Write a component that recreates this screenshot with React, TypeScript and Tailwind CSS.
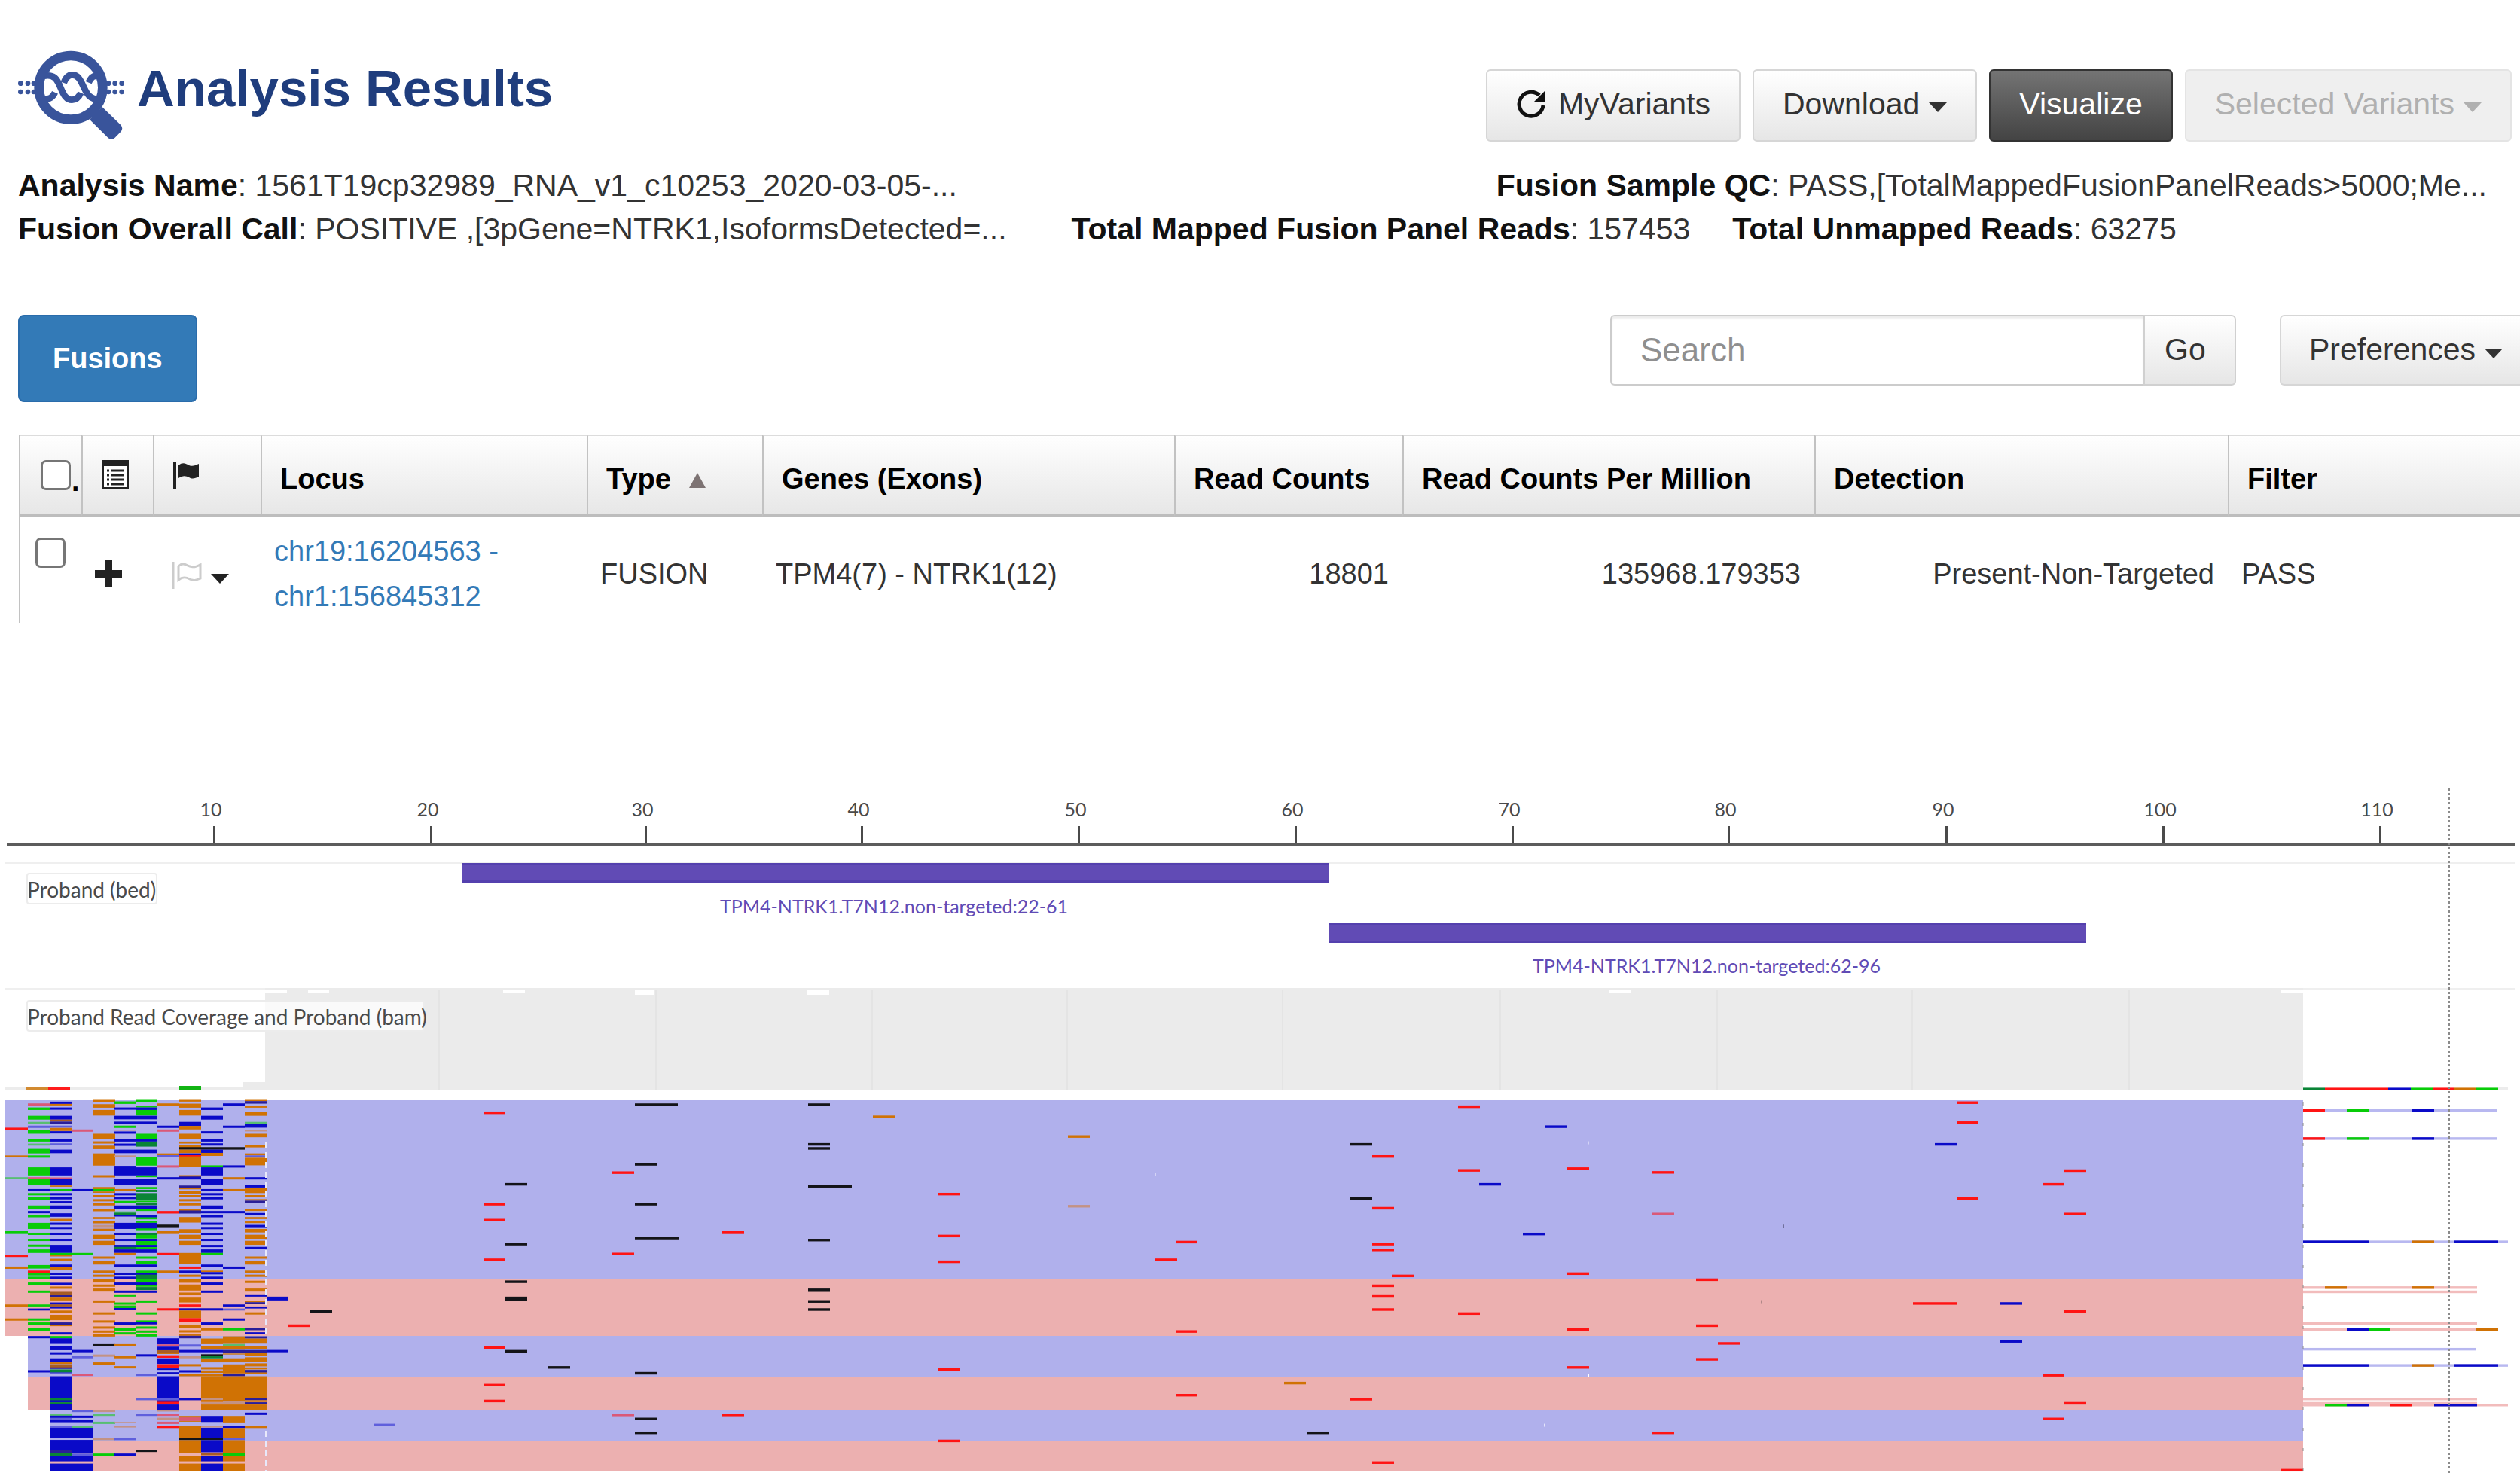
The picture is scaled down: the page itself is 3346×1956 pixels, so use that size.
import type { ReactNode } from "react"

const colors: Record<string, string> = {
  r: "#ff1414",
  g: "#08cc08",
  b: "#0a0ac8",
  o: "#d07204",
  k: "#141418",
  R: "#da5878",
  G: "#58be72",
  B: "#5f5fdc",
  O: "#c39284",
  n: "#2a1e98",
  d: "#0a8436",
  w: "#a85c24",
  l: "#b8b8f0",
  p: "#f2bcbc",
}

// Pileup positions are kept on a finer grid than the page, about three units to a pixel
const PILEUP_TOP = 1430
const UNITS = 2.981
const toY = (v: number) => PILEUP_TOP + v / UNITS

const ticks = [
  { label: "10", x: 284 },
  { label: "20", x: 572 },
  { label: "30", x: 857 },
  { label: "40", x: 1144 },
  { label: "50", x: 1432 },
  { label: "60", x: 1720 },
  { label: "70", x: 2008 },
  { label: "80", x: 2295 },
  { label: "90", x: 2584 },
  { label: "100", x: 2872 },
  { label: "110", x: 3160 },
]

const bands = [
  { x: 7, y: 1461, h: 237, fill: "#b0b0ec" },
  { x: 7, y: 1698, h: 76, fill: "#ecb0b0" },
  { x: 37, y: 1774, h: 54, fill: "#b0b0ec" },
  { x: 37, y: 1828, h: 45, fill: "#ecb0b0" },
  { x: 66, y: 1873, h: 41, fill: "#b0b0ec" },
  { x: 66, y: 1914, h: 40, fill: "#ecb0b0" },
]

// One entry per base: left edge, width, then "colour top height" triples
const columns: { x: number; w: number; marks: string }[] = [
  { x: 7, w: 30, marks: "r 201 9,o 311 8,G 397 8,g 610 9,r 704 9,o 751 9,o 901 9,o 956 9" },
  {
    x: 37,
    w: 29,
    marks:
      "R 105 10,g 121 10,g 154 15,G 178 8,B 193 9,g 211 14,g 247 9,G 264 8,g 285 18,g 311 9,g 358 32,R 397 7,g 403 26,b 444 9,g 460 9,g 477 9,g 509 14,b 531 9,g 548 8,g 578 24,g 617 9,g 641 9,g 664 9,g 683 14,g 745 14,r 767 9,g 776 10,g 791 9,g 814 9,g 846 9,g 901 8,b 917 8,g 956 9,g 972 9,g 995 10,b 1026 9,b 1161 9",
  },
  {
    x: 66,
    w: 29,
    marks:
      "b 98 9,o 107 6,b 121 9,b 154 15,w 169 8,n 177 10,B 193 8,o 202 12,b 215 9,b 247 9,B 263 8,b 288 14,b 358 32,R 398 6,b 404 26,o 430 5,g 444 9,b 460 9,b 476 9,b 492 8,b 509 15,b 540 14,o 562 9,b 577 9,b 594 9,b 617 9,b 641 9,b 665 32,g 697 7,o 704 7,o 720 9,b 743 9,o 752 14,b 775 9,b 791 9,b 815 9,o 830 9,w 848 16,n 862 9,o 871 14,b 893 9,w 901 8,b 909 8,o 925 9,o 942 21,n 972 9,o 981 6,b 1011 9,g 1026 9,b 1035 22,b 1067 15,b 1090 9,b 1114 16,o 1130 7,w 1138 14,n 1150 6,d 1158 12,b 1170 3,b 1185 85,d 1270 12,b 1280 8,d 1288 9,b 1296 22,G 1333 9,b 1341 9,B 1350 8,b 1358 9,B 1382 7,b 1389 39,b 1437 39,n 1476 14,d 1490 11,b 1500 22,b 1531 30",
  },
  {
    x: 95,
    w: 29,
    marks:
      "R 208 9,b 444 9,g 697 9,b 1081 9,B 1105 9,R 1176 8,B 1319 8,b 1341 9,b 1358 9,G 1382 7,b 1389 39,b 1437 39,b 1476 14,B 1491 9,b 1500 22,b 1531 30",
  },
  {
    x: 124,
    w: 29,
    marks:
      "o 91 8,o 108 14,o 131 22,o 225 22,o 255 9,o 272 14,o 303 14,o 317 34,o 389 9,o 436 8,g 444 10,o 454 5,o 468 9,o 484 9,o 500 9,o 523 9,o 555 8,o 571 9,O 586 9,o 601 9,o 625 16,o 649 16,o 711 9,o 729 14,o 767 9,o 783 9,o 800 14,o 822 9,o 838 9,o 885 9,o 932 9,o 964 9,o 988 9,o 1004 9,o 1019 9,k 1058 9,O 1099 9,o 1130 9,O 1319 8,G 1333 9,G 1365 9,O 1429 9,g 1491 9",
  },
  {
    x: 151,
    w: 29,
    marks:
      "g 97 10,b 121 9,b 154 14,b 177 9,g 193 9,O 209 4,b 216 9,b 247 9,b 264 9,b 288 14,O 311 8,b 352 38,b 404 25,o 444 9,b 460 9,b 476 8,g 491 9,b 509 14,g 533 5,d 538 10,b 548 5,b 578 24,b 617 9,b 641 9,b 665 9,d 673 9,b 683 14,o 697 8,b 743 9,b 775 9,b 791 9,b 814 9,b 846 9,g 861 9,g 893 9,g 905 10,b 915 9,b 972 9,g 995 10,g 1011 9,o 1058 9,o 1105 9,o 1145 9,O 1366 5,O 1383 5,B 1429 9,b 1491 9",
  },
  {
    x: 180,
    w: 29,
    marks:
      "g 91 8,g 115 6,b 121 10,g 131 22,b 154 14,b 177 9,g 225 22,b 247 9,d 256 20,b 288 14,g 317 34,b 358 32,g 390 7,b 404 25,g 436 8,d 447 9,d 460 28,g 490 6,d 500 8,b 509 14,g 524 7,b 548 9,g 556 8,g 571 7,b 578 24,g 600 7,d 617 9,g 626 14,b 641 9,g 650 15,b 665 9,g 674 8,b 683 14,g 711 9,g 729 14,b 743 9,g 767 8,b 775 9,d 783 16,g 799 14,b 814 11,g 825 6,d 832 12,b 846 9,g 885 9,g 932 9,g 964 7,b 971 9,g 988 9,g 1004 9,g 1019 9,b 1098 9,B 1176 8,B 1271 9,B 1333 9,k 1476 9",
  },
  {
    x: 209,
    w: 29,
    marks:
      "o 105 10,b 193 9,R 208 9,o 303 8,B 310 7,R 350 9,b 397 9,r 531 10,k 585 10,o 610 9,r 697 9,o 767 9,r 916 9,b 1035 24,R 1059 9,b 1068 14,w 1082 10,o 1091 6,r 1102 10,b 1114 22,r 1137 16,b 1154 6,b 1169 8,b 1185 85,B 1270 10,b 1280 8,r 1286 11,b 1297 22,O 1319 6,R 1333 9,O 1349 9,R 1365 9,r 1381 9",
  },
  {
    x: 238,
    w: 29,
    marks:
      "o 91 7,o 106 16,o 131 22,b 178 16,o 194 14,o 225 22,o 256 8,o 270 10,k 278 10,o 288 14,b 303 9,r 310 6,o 315 40,o 389 7,n 394 5,b 397 9,n 430 10,o 440 5,o 453 9,o 468 8,o 484 9,o 500 9,o 524 7,n 529 12,o 555 22,o 603 14,o 625 16,o 649 16,o 697 45,r 751 9,b 767 9,o 783 9,o 799 16,o 822 24,o 854 9,o 871 22,r 901 8,b 916 9,o 925 30,r 955 14,o 982 12,o 1003 9,o 1018 7,n 1025 10,B 1059 9,b 1081 9,O 1106 8,o 1137 9,b 1161 9,o 1176 9,b 1270 10,o 1342 8,R 1348 14,o 1362 3,o 1382 46,k 1428 10,o 1438 52,o 1500 22,o 1531 30",
  },
  {
    x: 267,
    w: 29,
    marks:
      "b 121 10,b 154 15,b 215 9,b 247 9,b 263 9,k 278 10,b 288 13,o 301 12,g 350 8,b 358 32,b 404 25,b 444 9,b 460 9,b 476 9,b 509 14,b 531 9,b 547 9,b 577 9,b 594 9,b 617 9,b 641 9,b 665 9,b 683 14,g 697 7,b 743 9,o 767 6,b 773 9,b 791 9,b 814 9,b 846 9,b 916 9,b 972 9,o 995 9,o 1036 22,o 1066 14,b 1081 9,k 1098 8,d 1106 8,o 1115 15,o 1149 9,o 1162 10,o 1176 9,o 1185 86,O 1271 8,o 1279 8,O 1288 7,o 1297 22,b 1342 24,O 1383 5,b 1389 39,k 1428 10,b 1438 48,w 1488 10,b 1500 22,b 1531 30",
  },
  {
    x: 296,
    w: 29,
    marks:
      "b 105 9,b 193 9,k 278 10,b 350 9,o 397 9,o 444 9,b 531 9,b 751 9,b 901 8,B 917 8,b 956 9,g 995 9,o 1027 30,G 1058 9,o 1066 14,n 1081 12,o 1095 4,o 1114 16,o 1138 36,n 1176 9,o 1185 98,O 1284 10,o 1297 22,o 1342 26,b 1382 8,o 1390 38,B 1429 9,o 1438 50,g 1490 10,o 1500 22,o 1531 30",
  },
  {
    x: 325,
    w: 29,
    marks:
      "o 91 5,n 96 10,o 114 8,o 138 16,G 178 8,b 185 16,O 209 7,o 225 14,o 271 8,o 303 8,B 311 8,o 320 30,b 397 9,b 429 9,o 440 20,o 468 9,o 484 6,n 490 10,o 524 7,b 539 9,o 555 8,o 571 8,b 586 9,o 602 14,o 625 16,o 649 16,b 673 9,o 711 9,o 729 14,o 767 9,o 783 9,o 807 9,o 838 9,b 861 9,o 886 6,n 892 8,b 909 8,o 932 9,n 994 9,b 1011 8,n 1027 9,o 1036 20,o 1066 13,n 1081 10,o 1094 9,o 1110 19,o 1134 12,o 1150 8,n 1160 11,o 1170 5,o 1185 86,n 1271 9,o 1280 7,n 1288 9,o 1297 22,b 1329 9,o 1382 8",
  },
  { x: 354, w: 29, marks: "b 870 15,b 1081 9" },
]

// Single mismatches: colour, left edge, vertical centres, optional width
const mismatches: [string, number, number[], number?][] = [
  ["k", 843, [110], 57],
  ["k", 843, [638], 58],
  ["k", 1073, [433], 58],
  ["k", 1073, [110, 267, 283, 646, 843, 889, 921]],
  ["k", 843, [346, 504, 1173, 1354, 1409]],
  ["k", 671, [425, 662, 811, 875, 881, 1086]],
  ["k", 412, [929]],
  ["k", 728, [1150]],
  ["k", 1793, [267, 481]],
  ["k", 1735, [1409]],
  ["r", 642, [142, 504, 567, 724, 1071, 1220, 1283]],
  ["r", 813, [379, 701]],
  ["R", 813, [1338]],
  ["r", 959, [614, 1338]],
  ["r", 1246, [464, 630, 732, 1158, 1441]],
  ["r", 383, [985]],
  ["r", 1534, [724]],
  ["r", 1561, [654, 1008, 1260]],
  ["r", 1822, [315, 520, 662, 685, 827, 866, 921, 1527]],
  ["r", 1848, [788]],
  ["r", 1793, [1276]],
  ["r", 1936, [118, 370, 937]],
  ["r", 2081, [363, 779, 1000, 1150]],
  ["r", 2194, [378, 1409]],
  ["R", 2194, [543]],
  ["r", 2252, [803, 985, 1118]],
  ["r", 2281, [1055]],
  ["r", 2598, [102, 181, 481]],
  ["r", 2540, [897], 58],
  ["r", 2712, [425, 1181, 1354]],
  ["r", 2741, [371, 543, 929, 1292]],
  ["r", 3029, [1557]],
  ["o", 1159, [158]],
  ["o", 1418, [236]],
  ["O", 1418, [512]],
  ["o", 1705, [1212]],
  ["b", 2052, [197]],
  ["b", 1964, [425]],
  ["b", 2022, [622]],
  ["b", 2569, [267]],
  ["b", 2656, [897, 1047]],
  ["B", 496, [1378]],
]

// Soft clipped read ends to the right of the covered region
const tails: [string, number, number[], number][] = [
  ["l", 3058, [133, 244], 258],
  ["l", 3058, [653, 1142], 272],
  ["l", 3058, [1078], 230],
  ["p", 3058, [834, 851, 976, 1000, 1275, 1292], 231],
  ["p", 3058, [1299], 272],
  ["r", 3058, [133, 244], 29],
  ["g", 3116, [133, 244], 29],
  ["b", 3203, [133, 244], 29],
  ["b", 3058, [653, 1142], 87],
  ["o", 3203, [653, 834, 1142], 29],
  ["b", 3259, [653, 1142], 58],
  ["o", 3087, [834], 29],
  ["b", 3116, [1000, 1299], 29],
  ["g", 3145, [1000], 29],
  ["o", 3288, [1000], 29],
  ["g", 3087, [1299], 29],
  ["r", 3174, [1299], 29],
  ["b", 3232, [1299], 57],
  ["d", 3058, [48], 29],
  ["r", 3087, [48], 84],
  ["b", 3171, [48], 30],
  ["g", 3201, [48], 29],
  ["r", 3230, [48], 29],
  ["o", 3259, [48], 29],
  ["g", 3288, [48], 29],
]

const coverageLines = [583, 871, 1158, 1417, 1703, 1992, 2280, 2539, 2827]

const coverageNotches = [
  { x: 352, w: 29, h: 4 },
  { x: 409, w: 28, h: 4 },
  { x: 668, w: 29, h: 4 },
  { x: 843, w: 26, h: 6 },
  { x: 1072, w: 29, h: 6 },
  { x: 2137, w: 28, h: 4 },
  { x: 3029, w: 29, h: 4 },
]

const specks = [
  { x: 1533, v: 380, fill: "#d4d4f6" },
  { x: 2108, v: 255, fill: "#d4d4f6" },
  { x: 2108, v: 1176, fill: "#ffffff" },
  { x: 2050, v: 1373, fill: "#e4e4fa" },
  { x: 2367, v: 585, fill: "#70709c" },
  { x: 2338, v: 884, fill: "#b08888" },
]

function Logo() {
  return (
    <svg viewBox="40 35 426 360" className="h-[120px] w-[142px]" fill="none" stroke="#39549b" aria-hidden="true">
      <circle cx="250" cy="183" r="127" strokeWidth="38" />
      <path d="M325 310 398 382Q412 396 426 382L448 360Q462 345 447 330L375 260Z" fill="#39549b" stroke="none" />
      <path d="M145 136C182 130 194 146 208 180C222 214 232 232 255 232C272 232 283 220 290 204" strokeWidth="26" />
      <path d="M222 164C230 142 240 132 256 132C278 132 288 150 302 182C316 212 328 230 362 230" strokeWidth="26" />
      <path d="M142 230C166 230 178 222 187 202" strokeWidth="26" />
      <path d="M321 163C330 142 340 134 362 135" strokeWidth="26" />
      <g fill="#39549b" stroke="none">
        {[50, 79, 103, 400, 426, 453].map((x) => (
          <g key={x}>
            <circle cx={x} cy="166" r="10" />
            <circle cx={x} cy="200" r="10" />
          </g>
        ))}
      </g>
    </svg>
  )
}

function Caret() {
  return (
    <svg viewBox="0 0 24 13" className="mt-2 h-[13px] w-6" fill="currentColor" aria-hidden="true">
      <path d="M0 0h24L12 13z" />
    </svg>
  )
}

function RepeatIcon() {
  return (
    <svg viewBox="0 0 40 40" className="h-10 w-10" aria-hidden="true">
      <path d="M31 8.500A16 16 0 1 0 36 22" fill="none" stroke="#111" strokeWidth="5" />
      <path d="M39 2v15H24z" fill="#111" />
    </svg>
  )
}

function Field({ label, children }: { label: string; children: ReactNode }) {
  return (
    <div className="whitespace-nowrap">
      <span className="font-bold text-[#111]">{label}</span>: {children}
    </div>
  )
}

const buttonBase = "flex h-24 items-center rounded-md border-2 pb-1 text-[41px] leading-none"
const lightButton = "border-[#d6d6d6] bg-linear-to-b from-white to-[#e6e6e6] text-[#333]"

function ResultsHeader() {
  return (
    <header className="flex items-start justify-between pt-[67px] pr-[11px] pl-6">
      <div className="flex items-start gap-4">
        <Logo />
        <h1 className="pt-[11px] text-[69px] leading-[80px] font-bold text-[#1f3d7d]">Analysis Results</h1>
      </div>
      <div className="flex gap-4 pt-[25px]">
        <button type="button" className={`${buttonBase} ${lightButton} gap-4 px-[38px]`}>
          <RepeatIcon />
          MyVariants
        </button>
        <button type="button" className={`${buttonBase} ${lightButton} gap-3 px-[38px]`}>
          Download
          <Caret />
        </button>
        <button type="button" className={`${buttonBase} border-[#333] bg-linear-to-b from-[#747474] to-[#444] px-[38px] text-white`}>
          Visualize
        </button>
        <button type="button" disabled className={`${buttonBase} gap-3 border-[#e4e4e4] bg-[#efefef] px-[38px] text-[#b0b0b0]`}>
          Selected Variants
          <Caret />
        </button>
      </div>
    </header>
  )
}

function Summary() {
  return (
    <section className="mt-[29px] pl-6 text-[41px] leading-[58px] text-[#333]">
      <div className="flex justify-between pr-11">
        <Field label="Analysis Name">1561T19cp32989_RNA_v1_c10253_2020-03-05-...</Field>
        <Field label="Fusion Sample QC">PASS,[TotalMappedFusionPanelReads&gt;5000;Me...</Field>
      </div>
      <div className="flex gap-14">
        <div className="pr-[30px]">
          <Field label="Fusion Overall Call">POSITIVE ,[3pGene=NTRK1,IsoformsDetected=...</Field>
        </div>
        <Field label="Total Mapped Fusion Panel Reads">157453</Field>
        <Field label="Total Unmapped Reads">63275</Field>
      </div>
    </section>
  )
}

function Toolbar() {
  return (
    <div className="mt-[85px] flex items-start justify-between pl-6">
      <button type="button" className="h-[116px] rounded-lg border-2 border-[#2a6cab] bg-[#337ab7] px-11 text-[38px] font-bold text-white">
        Fusions
      </button>
      <div className="flex">
        <form className="flex" onSubmit={(e) => e.preventDefault()}>
          <input
            type="search"
            aria-label="Search"
            placeholder="Search"
            className="h-[94px] w-[708px] rounded-l-md border-2 border-r-0 border-[#ccc] bg-white px-[38px] text-[44px] text-[#333] shadow-[inset_0_3px_3px_rgba(0,0,0,0.08)] outline-none placeholder:text-[#8f8f8f]"
          />
          <button type="submit" className="h-[94px] w-[123px] rounded-r-md border-2 border-[#d0d0d0] bg-linear-to-b from-white to-[#e6e6e6] pr-3 text-[41px] text-[#333]">
            Go
          </button>
        </form>
        <button type="button" className="ml-[58px] flex h-[94px] items-center gap-3 rounded-l-md border-2 border-r-0 border-[#d6d6d6] bg-linear-to-b from-white to-[#e6e6e6] pr-[23px] pl-[37px] text-[41px] text-[#333]">
          Preferences
          <Caret />
        </button>
      </div>
    </div>
  )
}

const th = "border-l-2 border-[#c2c2c2] pt-[11px] pl-6 text-left align-middle font-bold text-black"
const td = "px-[18px] pt-4 pb-[5px] align-middle"
const checkbox = "block h-10 w-10 appearance-none rounded-[7px] border-[3px] border-[#767676] bg-white"

function FusionTable() {
  return (
    <div className="mt-[43px] pl-[25px]">
      <table className="w-full table-fixed border-separate border-spacing-0 border-l-2 border-[#c2c2c2] text-[38px] leading-[60px] whitespace-nowrap text-[#333]">
        <colgroup>
          <col className="w-[81px]" />
          <col className="w-[95px]" />
          <col className="w-[143px]" />
          <col className="w-[433px]" />
          <col className="w-[233px]" />
          <col className="w-[547px]" />
          <col className="w-[303px]" />
          <col className="w-[547px]" />
          <col className="w-[549px]" />
          <col />
        </colgroup>
        <thead>
          <tr className="h-[109px] bg-linear-to-b from-white to-[#e6e6e6] *:border-t-2 *:border-b-4 *:border-t-[#dcdcdc] *:border-b-[#bdbdbd]">
            <th className="pl-[27px] text-left align-middle">
              <div className="flex items-end gap-px">
                <input type="checkbox" aria-label="Select all" className={checkbox} />
                <span className="leading-[24px] text-black">.</span>
              </div>
            </th>
            <th className="border-l-2 border-[#c2c2c2] pl-[25px] align-middle">
              <svg viewBox="0 0 36 39" className="h-[39px] w-9" aria-label="Details">
                <rect x="1.500" y="1.500" width="33" height="36" fill="#fff" stroke="#222" strokeWidth="3" />
                <path d="M0 0h36v8H0z" fill="#222" />
                <path d="M7 14h3M7 20h3M7 26h3M7 32h3M13 14h16M13 20h16M13 26h16M13 32h16" stroke="#222" strokeWidth="3" />
              </svg>
            </th>
            <th className="border-l-2 border-[#c2c2c2] pl-[25px] align-middle">
              <svg viewBox="0 0 34 36" className="h-9 w-[34px]" fill="#222" aria-label="Flag">
                <path d="M0 0h4v36H0zM7 5C13 0 17 3 21 5C26 7 29 5 34 3V20C29 22 26 24 21 21C17 19 13 18 7 22z" />
              </svg>
            </th>
            <th className={th}>Locus</th>
            <th className={th} aria-sort="ascending">
              <div className="flex items-center gap-6">
                Type
                <svg viewBox="0 0 22 20" className="mt-1 h-5 w-[22px]" fill="#7d7373" aria-hidden="true">
                  <path d="M11 0 22 20H0z" />
                </svg>
              </div>
            </th>
            <th className={th}>Genes (Exons)</th>
            <th className={th}>Read Counts</th>
            <th className={th}>Read Counts Per Million</th>
            <th className={th}>Detection</th>
            <th className={th}>Filter</th>
          </tr>
        </thead>
        <tbody>
          <tr>
            <td className="pt-7 pl-5 align-top">
              <input type="checkbox" aria-label="Select chr19:16204563 - chr1:156845312" className={checkbox} />
            </td>
            <td className="pt-[11px] pl-[18px] align-middle">
              <button type="button" aria-label="Expand row" className="block">
                <svg viewBox="0 0 36 36" className="h-9 w-9" fill="#222">
                  <path d="M13 0h10v13h13v10H23v13H13V23H0V13h13z" />
                </svg>
              </button>
            </td>
            <td className="pt-[15px] pl-[25px] align-middle">
              <button type="button" aria-label="Set flag" className="flex items-center gap-3 text-[#222]">
                <svg viewBox="0 0 40 36" className="h-9 w-10" fill="none" stroke="#ccc" strokeWidth="3">
                  <path d="M2 0v36M9 6C15 0 20 5 24 6C30 8 33 6 38 4V22C33 24 30 26 24 23C20 21 15 19 9 24z" />
                </svg>
                <Caret />
              </button>
            </td>
            <td className={td}>
              <a href="#" className="text-[#337ab7]">
                chr19:16204563 -<br />
                chr1:156845312
              </a>
            </td>
            <td className={td}>FUSION</td>
            <td className={td}>TPM4(7) - NTRK1(12)</td>
            <td className={`${td} text-right`}>18801</td>
            <td className={`${td} text-right`}>135968.179353</td>
            <td className={`${td} text-right`}>Present-Non-Targeted</td>
            <td className={td}>PASS</td>
          </tr>
        </tbody>
      </table>
    </div>
  )
}

function TrackViewer() {
  return (
    <svg viewBox="0 1040 3346 916" className="mt-[213px] block w-full font-['Lato',sans-serif]" role="img" aria-label="Read alignment tracks">
      {/* ruler */}
      <g fill="#4a4a4a" fontSize="25" textAnchor="middle">
        {ticks.map((t) => (
          <g key={t.label}>
            <text x={t.x - 4} y="1084">
              {t.label}
            </text>
            <rect x={t.x - 1} y="1097" width="3" height="23" />
          </g>
        ))}
      </g>
      <rect x="9" y="1119" width="3331" height="4" fill="#5c5c5c" />

      {/* bed track */}
      <rect x="7" y="1144" width="3333" height="3" fill="#efefef" />
      <rect x="7" y="1312" width="3333" height="3" fill="#efefef" />
      <rect x="613" y="1146" width="1151" height="26" fill="#5440ae" />
      <rect x="613" y="1149" width="1151" height="20" fill="#614bb5" />
      <rect x="1764" y="1225" width="1006" height="27" fill="#5440ae" />
      <rect x="1764" y="1228" width="1006" height="21" fill="#614bb5" />
      <g fill="#614bb5" fontSize="25" textAnchor="middle">
        <text x="1187" y="1213">
          TPM4-NTRK1.T7N12.non-targeted:22-61
        </text>
        <text x="2266" y="1292">
          TPM4-NTRK1.T7N12.non-targeted:62-96
        </text>
      </g>

      {/* coverage */}
      <rect x="352" y="1312" width="2706" height="135" fill="#ebebeb" />
      <rect x="323" y="1437" width="29" height="10" fill="#ebebeb" />
      <rect x="7" y="1444" width="316" height="3" fill="#ececec" />
      {coverageLines.map((x) => (
        <rect key={x} x={x - 1} y="1315" width="2" height="132" fill="#e4e4e4" />
      ))}
      {coverageNotches.map((n) => (
        <rect key={n.x} x={n.x} y="1315" width={n.w} height={n.h} fill="#fff" />
      ))}
      <rect x="35" y="1444" width="29" height="4" fill="#d28a30" />
      <rect x="64" y="1444" width="29" height="4" fill="#ff1c1c" />
      <rect x="238" y="1442" width="29" height="5" fill="#12b414" />
      <rect x="3317" y="1444" width="13" height="4" fill="#ececec" />

      {/* track names */}
      <g stroke="#ececec" strokeWidth="2" fill="#fff" fillOpacity="0.75">
        <rect x="36" y="1160" width="172" height="40" rx="3" />
        <rect x="36" y="1329" width="527" height="40" rx="3" />
      </g>
      <g fill="#4a4a4a" fontSize="28">
        <text x="36" y="1192">
          Proband (bed)
        </text>
        <text x="36" y="1361">
          Proband Read Coverage and Proband (bam)
        </text>
      </g>

      {/* reads */}
      {bands.map((b) => (
        <rect key={b.y} x={b.x} y={b.y} width={3058 - b.x} height={b.h} fill={b.fill} />
      ))}
      {columns.map((c) => (
        <g key={c.x}>
          {c.marks.split(",").map((m) => {
            const [color, top, height] = m.split(" ")
            return <rect key={m} x={c.x} y={toY(Number(top))} width={c.w} height={Number(height) / UNITS} fill={colors[color]} />
          })}
        </g>
      ))}
      {mismatches.map(([color, x, centers, width = 29]) =>
        centers.map((v) => <rect key={`${x}-${v}`} x={x} y={toY(v - 5)} width={width} height="3.400" fill={colors[color]} />)
      )}
      {tails.map(([color, x, centers, width]) =>
        centers.map((v) => <rect key={`${color}-${x}-${v}`} x={x} y={toY(v - 5)} width={width} height="3.400" fill={colors[color]} />)
      )}
      {specks.map((s) => (
        <rect key={`${s.x}-${s.v}`} x={s.x} y={toY(s.v)} width="2" height="4" fill={s.fill} />
      ))}
      <path d="M353 1517V1775M353 1900V1954" stroke="#e8e8fa" strokeWidth="2" strokeDasharray="8 5" />
      <path d="M3058 1464V1954" stroke="#8c8c8c" strokeWidth="1" strokeDasharray="4 23" />

      {/* cursor guide */}
      <path d="M3252 1047V1956" stroke="#8a8a8a" strokeWidth="2" strokeDasharray="3 3" />
    </svg>
  )
}

export default function App() {
  return (
    <main className="overflow-x-hidden bg-white font-['Liberation_Sans',Arial,sans-serif]">
      <ResultsHeader />
      <Summary />
      <Toolbar />
      <FusionTable />
      <TrackViewer />
    </main>
  )
}
